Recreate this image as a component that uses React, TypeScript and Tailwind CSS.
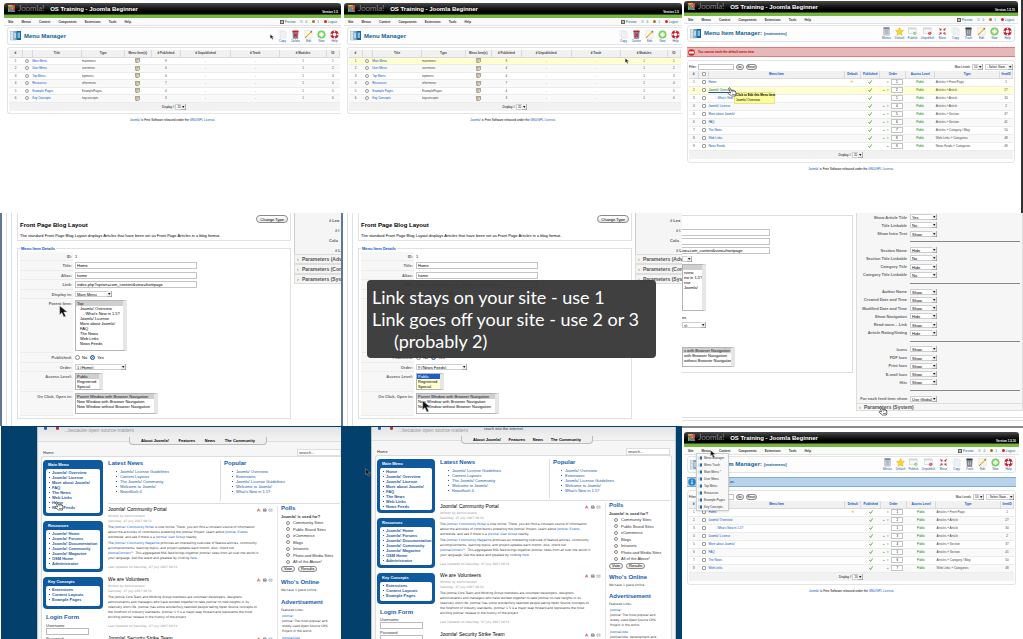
import type { ReactNode } from 'react';
import clsx from 'clsx';

const MENU_BAR = ['Site', 'Menus', 'Content', 'Components', 'Extensions', 'Tools', 'Help'];

const MENUS = [
  { title: 'Main Menu', type: 'mainmenu', published: 9 },
  { title: 'User Menu', type: 'usermenu', published: 4 },
  { title: 'Top Menu', type: 'topmenu', published: 4 },
  { title: 'Resources', type: 'othermenu', published: 7 },
  { title: 'Example Pages', type: 'ExamplePages', published: 4 },
  { title: 'Key Concepts', type: 'keyconcepts', published: 3 },
];

type MenuItem = { title: string; type: string; id: number; order: number; child?: boolean };

const ITEMS: MenuItem[] = [
  { title: 'Home', type: 'Articles » Front Page', id: 1, order: 1 },
  { title: 'Joomla! Overview', type: 'Articles » Article', id: 27, order: 2 },
  { title: "What's New in 1.5?", type: 'Articles » Article', id: 34, order: 1, child: true },
  { title: 'Joomla! License', type: 'Articles » Article', id: 2, order: 4 },
  { title: 'More about Joomla!', type: 'Articles » Section', id: 37, order: 5 },
  { title: 'FAQ', type: 'Articles » Section', id: 41, order: 6 },
  { title: 'The News', type: 'Articles » Category / Blog', id: 50, order: 7 },
  { title: 'Web Links', type: 'Web Links » Categories', id: 48, order: 8 },
  { title: 'News Feeds', type: 'News Feeds » Categories', id: 49, order: 9 },
];

/* ---------- drawings ---------- */

function JoomlaMark() {
  return (
    <svg viewBox="0 0 20 20" className="size-[9px] shrink-0" fill="none" strokeWidth="3.2" strokeLinecap="round">
      <path d="M4 15V9a3 3 0 0 1 5-2l5 5" stroke="#7ac143" />
      <path d="M5 4h6a3 3 0 0 1 2 5l-5 5" stroke="#f9a541" />
      <path d="M16 5v6a3 3 0 0 1-5 2L6 8" stroke="#f44321" />
      <path d="M15 16H9a3 3 0 0 1-2-5l5-5" stroke="#5091cd" />
      <circle cx="4" cy="4" r="2" fill="#f9a541" />
      <circle cx="16" cy="4" r="2" fill="#f44321" />
      <circle cx="4" cy="16" r="2" fill="#7ac143" />
      <circle cx="16" cy="16" r="2" fill="#5091cd" />
    </svg>
  );
}

function ManagerIcon() {
  return (
    <svg viewBox="0 0 22 20" className="h-[10px] w-[11px] shrink-0">
      <rect x="0.5" y="1" width="12" height="17" fill="#f7fafc" stroke="#8fa9bd" />
      <path d="M2 4h5M2 7h4M2 10h4M2 13h4M2 16h9" stroke="#8fb2cc" />
      <rect x="7" y="1" width="6" height="16" fill="#3c7fa9" />
      <rect x="8.5" y="3" width="3" height="12" fill="#e6f0f6" />
      <rect x="13" y="0" width="9" height="18" fill="#16679b" />
      <rect x="15" y="3" width="5" height="11" fill="#7dbbe0" />
    </svg>
  );
}

function ToolIcon({ name }: { name: string }) {
  const box = 'size-[9px]';
  switch (name) {
    case 'Menus':
      return (
        <svg viewBox="0 0 20 20" className={box}>
          <rect x="4" y="1" width="12" height="17" fill="#d3d9e0" stroke="#8a94a0" />
          <rect x="4" y="1" width="12" height="4" fill="#7a8794" />
          <path d="M6 8h8M6 11h8M6 14h8" stroke="#6f7c8a" />
        </svg>
      );
    case 'Default':
      return (
        <svg viewBox="0 0 20 20" className={box}>
          <path d="m10 1 2.8 6 6.2.7-4.6 4.4 1.3 6.4L10 15.3 4.3 18.5l1.3-6.4L1 7.7 7.2 7z" fill="#fbd52b" stroke="#e2a41a" />
        </svg>
      );
    case 'Publish':
    case 'Unpublish':
      return (
        <svg viewBox="0 0 20 20" className={box}>
          <rect x="1" y="2" width="17" height="13" fill="#f5f7f8" stroke="#b9c2c8" />
          <path d="M1 4h17" stroke="#c3cbd1" strokeWidth="2" />
          <circle cx="15" cy="14" r="3.5" fill={name === 'Publish' ? '#7cc95d' : '#d83a3a'} />
          <path d={name === 'Publish' ? 'm13 14 1.5 2 3-4' : 'm13.5 12.5 3 3'} stroke="#fff" strokeWidth="1.5" fill="none" />
        </svg>
      );
    case 'Move':
      return (
        <svg viewBox="0 0 20 20" className={box}>
          <path d="M2 2h5v5H2zM13 2h5v5h-5zM2 12h5v5H2zM13 12h5v5h-5z" fill="#ddcccc" />
          <path d="m3 3 4 4m0-3v3H4M17 3l-4 4m0-3v3h3M3 17l4-4m0 3v-3H4M17 17l-4-4m0 3v-3h3" stroke="#b01e28" strokeWidth="1.5" fill="none" />
        </svg>
      );
    case 'Copy':
      return (
        <svg viewBox="0 0 20 20" className={box}>
          <rect x="2" y="1" width="11" height="14" fill="#f6f8fa" stroke="#dde2e6" />
          <rect x="6" y="4" width="12" height="14" fill="#eef2f5" stroke="#d3dade" />
        </svg>
      );
    case 'Delete':
    case 'Trash':
      return (
        <svg viewBox="0 0 20 20" className={box}>
          <path d="M4 5h12l-1 14H5z" fill={name === 'Delete' ? '#8b8c98' : '#848c93'} stroke="#5a6269" />
          <rect x="3" y="1" width="14" height="4" rx="1" fill={name === 'Delete' ? '#bb2335' : '#343b42'} />
          {name === 'Delete' ? (
            <path d="m7 8 6 7m0-7-6 7" stroke="#d81f33" strokeWidth="2.6" />
          ) : (
            <path d="M8 8v8m4-8v8" stroke="#d2d7db" strokeWidth="1.5" />
          )}
        </svg>
      );
    case 'Edit':
      return (
        <svg viewBox="0 0 20 20" className={box}>
          <rect x="2" y="1" width="16" height="17" fill="#faf6e8" stroke="#dcd8cb" />
          <path d="M4 16 16 4" stroke="#e2b23c" strokeWidth="2.5" />
          <path d="m3 17 2-2" stroke="#6b4f1e" strokeWidth="2" />
          <path d="m15 5 2-2" stroke="#444" strokeWidth="2.5" />
        </svg>
      );
    case 'New':
      return (
        <svg viewBox="0 0 20 20" className={box}>
          <circle cx="10" cy="10" r="8.5" fill="#86d465" stroke="#5db83b" />
          <path d="M10 5v10M5 10h10" stroke="#fff" strokeWidth="4" />
        </svg>
      );
    default:
      return (
        <svg viewBox="0 0 20 20" className={box}>
          <circle cx="10" cy="10" r="6.5" fill="none" stroke="#c8202f" strokeWidth="5" />
          <path d="M10 1v4M10 15v4M1 10h4M15 10h4" stroke="#fff" strokeWidth="3" />
        </svg>
      );
  }
}

function Arrow({ className }: { className?: string }) {
  return (
    <svg viewBox="0 0 14 20" className={clsx('pointer-events-none absolute z-20', className)}>
      <path d="M1 1v14l3.5-3.2L7.5 18.5l3-1.3-3-6.4H13z" fill="#111" stroke="#ddd" strokeWidth="0.8" />
    </svg>
  );
}

function Hand({ className }: { className?: string }) {
  return (
    <svg viewBox="0 0 20 20" className={clsx('pointer-events-none absolute z-20 size-[10px]', className)}>
      <path
        d="M6 9 3.5 3.5Q3 2 4.5 1.5T6.5 3L8.5 7.5 13 6.5 16.5 8 18 12l-1 6H9L3 13.5Q1.5 12 2.5 11t3 .5L7 12z"
        fill="#fff"
        stroke="#222"
        strokeWidth="1.3"
      />
      <path d="m10 8 1 3m2-4 1 3m2-2 .5 2M10 15h6" stroke="#222" fill="none" />
    </svg>
  );
}

function Check() {
  return (
    <svg viewBox="0 0 10 10" className="mx-auto size-[4px]">
      <path d="m1 5 3 4 5-8" fill="none" stroke="#3da021" strokeWidth="2" />
    </svg>
  );
}

function ArticleIcons() {
  return (
    <svg viewBox="0 0 48 12" className="h-[4px] w-[17px] shrink-0">
      <path d="M3 11 6 2l2 6 3 3M3 8l8-2" stroke="#c44" fill="none" strokeWidth="1.8" />
      <rect x="20" y="4" width="10" height="6" fill="#9a9a9a" stroke="#666" />
      <rect x="22" y="1" width="6" height="4" fill="#ddd" stroke="#888" />
      <path d="M37 3h10v7H37zl5 4 5-4" fill="#e8eef4" stroke="#6b84a0" />
    </svg>
  );
}

/* ---------- small controls ---------- */

function Drop({ label, value, className }: { label: string; value: string; className?: string }) {
  return (
    <span className={clsx('relative inline-flex h-[6px] shrink-0', className)}>
      <select aria-label={label} className="h-full w-full appearance-none border border-[#cfcfcf] bg-white pl-px text-black">
        <option>{value}</option>
      </select>
      <svg viewBox="0 0 10 12" className="pointer-events-none absolute top-0 right-0 h-full w-[5px]">
        <path d="M0 0h10v12H0z" fill="#ededed" />
        <path d="M10 0v12H0" fill="none" stroke="#777" strokeWidth="2" />
        <path d="M2 4h5L4.5 8z" fill="#222" />
      </svg>
    </span>
  );
}

function Pill({ children, className }: { children: ReactNode; className?: string }) {
  return (
    <button
      type="button"
      className={clsx(
        'shrink-0 rounded-full border border-[#8a8a8a] bg-linear-to-b from-white to-[#e8e8e8] whitespace-nowrap text-black',
        className,
      )}
    >
      {children}
    </button>
  );
}

type Option = string | { text: string; depth: number };

function ListBox({ label, options, className, tone = 'grey' }: { label: string; options: Option[]; className?: string; tone?: 'grey' | 'blue' }) {
  const rows = options.map((o) => (typeof o === 'string' ? { text: o, depth: 0 } : o));
  return (
    <select
      multiple
      aria-label={label}
      defaultValue={[rows[0].text]}
      className={clsx(
        'block shrink-0 overflow-hidden rounded-none border border-r-4 border-[#b5b5b5] border-r-[#e6e6e6] p-0 text-[4px] leading-[4px]',
        tone === 'blue' ? 'bg-[#ffffcf]' : 'bg-white',
        className,
      )}
    >
      {rows.map((o) => (
        <option
          key={o.text}
          value={o.text}
          className={clsx(
            'h-[5px] min-h-0 overflow-hidden pr-0 pb-0 leading-[5px]',
            o.depth === 0 && 'pl-px',
            o.depth === 1 && 'pl-[4px]',
            o.depth === 2 && 'pl-[7px]',
            tone === 'blue'
              ? 'checked:bg-linear-to-b checked:from-[#1d5fc4] checked:to-[#1d5fc4] checked:text-white'
              : 'checked:bg-linear-to-b checked:from-[#cfcfcf] checked:to-[#cfcfcf]',
          )}
        >
          {o.text}
        </option>
      ))}
    </select>
  );
}

/* ---------- administrator ---------- */

function AdminShell({ children, menu, version, className }: { children: ReactNode; menu?: ReactNode; version: string; className?: string }) {
  return (
    <section className={clsx('relative flex min-w-0 flex-col overflow-hidden bg-white text-[3px] leading-[4px] text-[#444]', className)}>
      <header className="flex h-[12px] shrink-0 items-center rounded-t-[3px] border-b border-[#2c5d17] bg-linear-to-b from-[#4c4c4c] via-[#161616] to-black px-[3px] text-white">
        <JoomlaMark />
        <span className="ml-[2px] font-[Lato] text-[8px] leading-[9px] font-light text-[#d7d7d7]">Joomla!</span>
        <h1 className="ml-[6px] text-[6px] leading-[8px] font-bold whitespace-nowrap">OS Training - Joomla Beginner</h1>
        <span className="ml-auto self-end font-bold whitespace-nowrap">{version}</span>
      </header>
      <div className="h-[3px] shrink-0 bg-[#76b53f]" />
      <nav className="relative flex h-[8px] shrink-0 items-center gap-[8px] border-b border-[#e3e3e3] bg-[#fafafa] px-[4px] font-bold text-[#333]">
        {MENU_BAR.map((m) => (
          <a key={m} href="#">
            {m}
          </a>
        ))}
        <span className="ml-auto flex items-center gap-[5px] font-normal text-[#1d5a9c]">
          <a href="#" className="flex items-center gap-px">
            <i className="size-[4px] border border-[#666] bg-[#c9c2a4]" />
            Preview
          </a>
          <span className="flex items-center gap-[2px]">
            <i className="size-[3px] bg-[#cfdde8]" />0
          </span>
          <span className="flex items-center gap-[2px]">
            <i className="size-[3px] rounded-full bg-[#a5702c]" />1
          </span>
          <a href="#" className="flex items-center gap-px">
            <i className="size-[3px] rounded-full bg-[#d4213a]" />
            Logout
          </a>
        </span>
        {menu}
      </nav>
      {children}
      <p className="mt-[4px] shrink-0 text-center whitespace-nowrap text-black">
        <a href="#" className="text-[#0b55c4]">Joomla!</a> is Free Software released under the{' '}
        <a href="#" className="text-[#0b55c4]">GNU/GPL License</a>.
      </p>
    </section>
  );
}

function Toolbar({ title, sub, tools, className }: { title: string; sub?: string; tools: string[]; className?: string }) {
  return (
    <div className={clsx('mx-[3px] flex shrink-0 items-center rounded-[3px] border border-[#e4e4e4] bg-[#fdfdfd] pl-[2px]', className)}>
      <ManagerIcon />
      <h2 className="ml-[3px] text-[6px] leading-[8px] font-bold whitespace-nowrap text-[#146295]">
        {title}
        {sub && <small className="ml-[2px] text-[4px] leading-[8px]">{sub}</small>}
      </h2>
      <div className="ml-auto flex">
        {tools.map((t) => (
          <button
            key={t}
            type="button"
            className={clsx('flex flex-col items-center text-[3px] leading-[4px] text-[#1d5a9c]', t === 'Unpublish' ? 'w-[17px]' : 'w-[13px]')}
          >
            <ToolIcon name={t} />
            {t}
          </button>
        ))}
      </div>
    </div>
  );
}

const headCell = 'border-r border-b border-[#dadada] bg-[#f1f1f1] p-0 font-bold whitespace-nowrap overflow-hidden';
const bodyCell = 'border-b border-[#ececec] p-0 whitespace-nowrap overflow-hidden';

function DisplayRow({ span }: { span: number }) {
  return (
    <tfoot>
      <tr>
        <td colSpan={span} className="h-[9px] border-t border-[#999] bg-[#f2f2f2] p-0">
          <div className="flex items-center justify-center gap-px text-black">
            Display # <Drop label="Display" value="20" className="w-[11px]" />
          </div>
        </td>
      </tr>
    </tfoot>
  );
}

function MenuManager({ active, name, className, children }: { active?: number; name: string; className?: string; children?: ReactNode }) {
  return (
    <AdminShell className={className} version="Version 1.5">
      <Toolbar title="Menu Manager" tools={['Copy', 'Delete', 'Edit', 'New', 'Help']} className="mt-px mr-0 h-[18px] rounded-r-none border-r-0" />
      <div className="mt-[2px] ml-[3px] shrink-0 rounded-l-[3px] border border-r-0 border-[#e4e4e4] px-px py-[2px]">
        <table className="w-full table-fixed border-collapse">
          <colgroup>
            <col className="w-[4%]" />
            <col className="w-[3%]" />
            <col className="w-[15%]" />
            <col className="w-[13%]" />
            <col className="w-[8%]" />
            <col className="w-[9%]" />
            <col className="w-[15%]" />
            <col className="w-[15%]" />
            <col className="w-[14%]" />
            <col className="w-[4%]" />
          </colgroup>
          <thead>
            <tr className="h-[7px]">
              <th className={headCell}>#</th>
              <th className={headCell} />
              {['Title', 'Type', 'Menu Item(s)', '# Published', '# Unpublished', '# Trash', '# Modules', 'ID'].map((h) => (
                <th key={h} className={headCell}>{h}</th>
              ))}
            </tr>
          </thead>
          <tbody className="text-center">
            {MENUS.map((m, i) => (
              <tr key={m.title} className={clsx(i % 2 === 0 ? 'h-[7px]' : 'h-[8px]', active === i ? 'bg-[#ffffd2]' : i % 2 === 1 && 'bg-[#f9f9f9]')}>
                <td className={bodyCell}>{i + 1}</td>
                <td className={bodyCell}>
                  <input type="radio" name={name} aria-label={m.title} className="mx-auto block size-[4px] appearance-none rounded-full border border-[#999] bg-white" />
                </td>
                <td className={clsx(bodyCell, 'text-left')}>
                  <a href="#" className="text-[#0b55c4]">{m.title}</a>
                </td>
                <td className={clsx(bodyCell, 'text-left')}>{m.type}</td>
                <td className={bodyCell}>
                  <svg viewBox="0 0 12 12" className="mx-auto size-[5px]">
                    <path d="M1 1h10v7l-3 3H2z" fill="#e9dfc8" stroke="#776a50" strokeWidth="1.5" />
                    <path d="M3 4h6M3 7h4" stroke="#776a50" />
                  </svg>
                </td>
                <td className={bodyCell}>{m.published}</td>
                <td className={bodyCell}>-</td>
                <td className={bodyCell}>-</td>
                <td className={bodyCell}>1</td>
                <td className={bodyCell}>{i + 1}</td>
              </tr>
            ))}
          </tbody>
          <DisplayRow span={10} />
        </table>
      </div>
      {children}
    </AdminShell>
  );
}

function ItemManager({
  items,
  active,
  message,
  menu,
  className,
  children,
}: {
  items: MenuItem[];
  active?: number;
  message: ReactNode;
  menu?: ReactNode;
  className?: string;
  children?: ReactNode;
}) {
  return (
    <AdminShell className={className} menu={menu} version="Version 1.5.10">
      <Toolbar
        title="Menu Item Manager:"
        sub="[mainmenu]"
        tools={['Menus', 'Default', 'Publish', 'Unpublish', 'Move', 'Copy', 'Trash', 'Edit', 'New', 'Help']}
        className="mt-px h-[17px]"
      />
      {message}
      <div className="mx-[3px] mt-[3px] shrink-0 rounded-[3px] border border-[#e4e4e4] px-px pt-[2px] pb-[3px]">
        <div className="flex h-[7px] items-center gap-[2px] text-black">
          <label className="flex items-center gap-px">
            Filter: <input type="text" className="h-[6px] w-[36px] border border-[#c4c4c4]" />
          </label>
          <Pill className="px-px">Go</Pill>
          <Pill className="px-px">Reset</Pill>
          <span className="ml-auto">Max Levels</span>
          <Drop label="Max Levels" value="10" className="w-[11px]" />
          <Drop label="State" value="- Select State -" className="w-[28px]" />
        </div>
        <table className="mt-px w-full table-fixed border-collapse">
          <colgroup>
            <col className="w-[3%]" />
            <col className="w-[3%]" />
            <col className="w-[42%]" />
            <col className="w-[5%]" />
            <col className="w-[6%]" />
            <col className="w-[8%]" />
            <col className="w-[9%]" />
            <col className="w-[20%]" />
            <col className="w-[4%]" />
          </colgroup>
          <thead className="text-[#0b55c4]">
            <tr className="h-[7px]">
              <th className={headCell}>#</th>
              <th className={headCell}>
                <input type="checkbox" aria-label="Select all" className="mx-auto block size-[4px] appearance-none rounded-[1px] border border-[#999] bg-white" />
              </th>
              {['Menu Item', 'Default', 'Published', 'Order', 'Access Level', 'Type', 'ItemID'].map((h) => (
                <th key={h} className={headCell}>{h}</th>
              ))}
            </tr>
          </thead>
          <tbody className="text-center">
            {items.map((m, i) => (
              <tr key={m.title} className={clsx('h-[8px]', active === i ? 'bg-[#ffffd2]' : i % 2 === 1 && 'bg-[#f9f9f9]')}>
                <td className={bodyCell}>{i + 1}</td>
                <td className={bodyCell}>
                  <input type="checkbox" aria-label={m.title} className="mx-auto block size-[4px] appearance-none rounded-[1px] border border-[#999] bg-white" />
                </td>
                <td className={clsx(bodyCell, 'text-left', m.child && 'pl-[6px]')}>
                  {m.child && <span className="text-[#999]">└ </span>}
                  <a href="#" className={clsx('text-[#0b55c4]', active === i && 'underline')}>{m.title}</a>
                </td>
                <td className={bodyCell}>{i === 0 && <span className="text-[4px] text-[#eec41c]">★</span>}</td>
                <td className={bodyCell}>
                  <Check />
                </td>
                <td className={bodyCell}>
                  <div className="flex items-center justify-end gap-[2px] pr-[3px] text-[#55a83a]">
                    {!m.child && i > 0 && <span>▴</span>}
                    {!m.child && i < items.length - 1 && <span>▾</span>}
                    <input
                      type="text"
                      aria-label={`Order of ${m.title}`}
                      defaultValue={m.order}
                      className="h-[6px] w-[12px] border border-[#c4c4c4] bg-white text-center text-[3px] leading-[4px] text-black"
                    />
                  </div>
                </td>
                <td className={clsx(bodyCell, 'text-[#008000]')}>Public</td>
                <td className={clsx(bodyCell, 'pl-px text-left')}>{m.type}</td>
                <td className={bodyCell}>{m.id}</td>
              </tr>
            ))}
          </tbody>
          <DisplayRow span={9} />
        </table>
      </div>
      {children}
    </AdminShell>
  );
}

function MenusDropdown() {
  const entries = ['Menu Manager', 'Menu Trash', 'Main Menu *', 'User Menu', 'Top Menu', 'Resources', 'Example Pages', 'Key Concepts'];
  return (
    <ul className="absolute top-[6px] left-[12px] z-10 w-[33px] border border-[#ccc] bg-[#f8f8f8] font-normal shadow">
      {entries.map((e) => (
        <li key={e} className="flex h-[7px] items-center gap-[2px] px-px">
          <svg viewBox="0 0 10 10" className="size-[4px]">
            <path d="M0 1h10v8H0z" fill="#cfdfea" />
            <path d="M5 1h5v8H5z" fill="#2c6b97" />
          </svg>
          <a href="#" className="whitespace-nowrap">{e}</a>
        </li>
      ))}
    </ul>
  );
}

/* ---------- menu item edit form ---------- */

const PARENTS: Option[] = [
  'Top',
  { text: 'Joomla! Overview', depth: 1 },
  { text: "- What's New in 1.5?", depth: 2 },
  { text: 'Joomla! License', depth: 1 },
  { text: 'More about Joomla!', depth: 1 },
  { text: 'FAQ', depth: 1 },
  { text: 'The News', depth: 1 },
  { text: 'Web Links', depth: 1 },
  { text: 'News Feeds', depth: 1 },
];
const TARGETS = ['Parent Window with Browser Navigation', 'New Window with Browser Navigation', 'New Window without Browser Navigation'];

function Row({ label, className, children }: { label: string; className?: string; children: ReactNode }) {
  return (
    <div className={clsx('flex shrink-0', className)}>
      <span className="w-[53px] shrink-0 border-b border-[#ececec] bg-[#f7f7f7] pt-[2px] pr-px text-right font-bold text-[#666]">{label}:</span>
      <div className="ml-[2px] flex items-start pt-px">{children}</div>
    </div>
  );
}

function EditForm({ order, blue, name, children }: { order: string; blue?: boolean; name: string; children?: ReactNode }) {
  const field = 'h-[7px] w-[122px] border border-[#c4c4c4] bg-white px-px text-[4px] leading-[5px]';
  return (
    <section className="relative flex min-w-0 overflow-hidden border-l-2 border-[#5e7697] bg-white pl-[4px] text-[4px] leading-[5px] text-black">
      <div className="flex border-x border-[#d9e2ea] px-[2px]" />
      <div className="ml-[5px] w-[274px] shrink-0">
        <div className="flex h-[28px] justify-between border border-t-0 border-[#e2e2e2] pl-[2px]">
          <div>
            <h2 className="mt-[8px] text-[6px] leading-[8px] font-bold whitespace-nowrap">Front Page Blog Layout</h2>
            <p className="mt-[4px] whitespace-nowrap">
              The standard Front Page Blog Layout displays Articles that have been set as Front Page Articles in a blog format.
            </p>
          </div>
          <Pill className="mt-[2px] mr-[2px] h-[8px] px-[3px] leading-[5px]">Change Type</Pill>
        </div>
        <fieldset className="mt-[5px] min-w-0 border border-[#e0e0e0] px-[2px] pt-px pb-[2px]">
          <legend className="px-px font-bold text-[#0b55c4]">Menu Item Details</legend>
          <Row label="ID" className="h-[9px]">
            <span className="pt-px">1</span>
          </Row>
          <Row label="Title" className="h-[10px]"><input aria-label="Title" defaultValue="Home" className={field} /></Row>
          <Row label="Alias" className="h-[9px]"><input aria-label="Alias" defaultValue="home" className={field} /></Row>
          <Row label="Link" className="h-[10px]"><input aria-label="Link" defaultValue="index.php?option=com_content&view=frontpage" className={field} /></Row>
          <Row label="Display in" className="h-[9px]"><Drop label="Display in" value="Main Menu" className="w-[37px]" /></Row>
          <Row label="Parent Item" className="h-[54px]"><ListBox label="Parent Item" options={PARENTS} className="h-[51px] w-[52px]" /></Row>
          <Row label="Published" className="h-[10px]">
            <label className="flex items-center gap-[2px] pt-px">
              <input type="radio" name={name} className="size-[5px] appearance-none rounded-full border border-[#888]" /> No
            </label>
            <label className="ml-[3px] flex items-center gap-[2px] pt-px">
              <input type="radio" name={name} defaultChecked className="size-[5px] appearance-none rounded-full border border-[#3b6ea5] bg-[#234f7d] shadow-[inset_0_0_0_1px_#cfe3f7]" /> Yes
            </label>
          </Row>
          <Row label="Order" className="h-[9px]"><Drop label="Order" value={order} className="w-[51px]" /></Row>
          <Row label="Access Level" className="h-[20px]">
            <ListBox label="Access Level" options={['Public', 'Registered', 'Special']} className="h-[17px] w-[28px]" tone={blue ? 'blue' : 'grey'} />
          </Row>
          <Row label="On Click, Open in" className="h-[24px]"><ListBox label="On Click, Open in" options={TARGETS} className="h-[21px] w-[83px]" /></Row>
        </fieldset>
      </div>
      <aside className="ml-[3px] min-w-0 flex-1 leading-[5px] font-bold whitespace-nowrap text-[#555]">
        <div className="flex h-[41px] flex-col border-l border-[#ccc] bg-[#f5f5f5] pl-[34px]">
          {['# Lea', '# I', 'Colu', '# L'].map((t) => (
            <p key={t} className={clsx('h-[10px] pt-[5px]', t.length < 4 && 'pl-[6px]')}>{t}</p>
          ))}
        </div>
        {['Parameters (Adv', 'Parameters (Con', 'Parameters (Sys'].map((t) => (
          <p key={t} className="flex h-[10px] items-center border border-r-0 border-[#ddd] bg-[#f4f4f4] text-[5px]">
            <span className="w-[7px] shrink-0 pl-[2px] text-[#6fae45]">›</span>
            {t}
          </p>
        ))}
      </aside>
      {children}
    </section>
  );
}

const PARAMS: ([string, string] | null)[] = [
  ['Show Article Title', 'Yes'],
  ['Title Linkable', 'No'],
  ['Show Intro Text', 'Show'],
  null,
  ['Section Name', 'Hide'],
  ['Section Title Linkable', 'No'],
  ['Category Title', 'Hide'],
  ['Category Title Linkable', 'No'],
  null,
  ['Author Name', 'Show'],
  ['Created Date and Time', 'Show'],
  ['Modified Date and Time', 'Show'],
  ['Show Navigation', 'Hide'],
  ['Read more... Link', 'Show'],
  ['Article Rating/Voting', 'Hide'],
  null,
  ['Icons', 'Show'],
  ['PDF Icon', 'Show'],
  ['Print Icon', 'Show'],
  ['E-mail Icon', 'Show'],
  ['Hits', 'Show'],
  null,
  ['For each feed item show', 'Use Global'],
];

// Same form scrolled down and to the right, so its left part is cut off
function ParamsScreen() {
  const field = 'block h-[7px] w-full border border-l-0 border-[#c4c4c4] bg-white text-[4px] leading-[5px]';
  return (
    <section className="relative flex min-w-0 flex-col overflow-hidden bg-white text-[4px] leading-[5px] text-black">
      <div className="flex">
        <div className="mt-[2px] h-[158px] w-[171px] shrink-0 overflow-hidden border border-l-0 border-[#ddd] pt-[13px]">
          <div className="flex w-[88px] flex-col gap-[2px]">
            <input aria-label="Title" className={field} />
            <input aria-label="Alias" className={field} />
            <input aria-label="Link" defaultValue="ion=com_content&view=frontpage" className={field} />
          </div>
          <Drop label="Menu" value="" className="mt-[2px] w-[10px]" />
          <ListBox label="Parent" options={[' ', 'rview', 'ew in 1.5?', 'nse', 'Joomla!']} className="mt-[2px] h-[47px] w-[24px]" />
          <p className="mt-[4px]">es</p>
          <Drop label="Order" value="s)" className="mt-[2px] w-[24px]" />
          <ListBox
            label="Target"
            options={['s with Browser Navigation', 'with Browser Navigation', 'without Browser Navigation']}
            className="mt-[19px] h-[20px] w-[53px]"
          />
        </div>
        <div className="ml-[3px] min-w-0 flex-1 border-x border-[#ddd] bg-[#f6f6f6]">
          <div className="flex h-[190px] flex-col">
            {PARAMS.map((p, i) =>
              p ? (
                <label key={i} className="flex flex-1 items-center">
                  <span className="w-[50px] shrink-0 text-right font-bold whitespace-nowrap text-[#666]">{p[0]}</span>
                  <Drop label={p[0]} value={p[1]} className="ml-[3px] w-[27px]" />
                </label>
              ) : (
                <div key={i} className="mr-[2px] ml-[53px] flex flex-1 items-center">
                  <hr className="w-full border-[#888]" />
                </div>
              ),
            )}
          </div>
          <p className="flex h-[8px] items-center border-y border-[#ddd] text-[5px] font-bold text-[#555]">
            <span className="w-[7px] pl-[2px] text-[#6fae45]">›</span>
            Parameters (System)
          </p>
        </div>
      </div>
      <div className="mt-[6px] h-[4px] border-y border-[#e0e0e0]" />
      <Hand className="top-[193px] left-[196px]" />
    </section>
  );
}

/* ---------- public site ---------- */

const siteHeading = 'text-[6px] leading-[7px] font-bold whitespace-nowrap text-[#135cae]';
// wide face, so that running text stays legible one step smaller
const siteText = "font-['DejaVu_Sans',sans-serif] text-[3px] leading-[5px]";

function Module({ title, links, className }: { title: string; links: string[]; className?: string }) {
  return (
    <div className={clsx('shrink-0 rounded-[4px] border-3 border-t-0 border-[#0f5a9e] bg-[#0f5a9e]', className)}>
      <h3 className="h-[9px] pt-[3px] pl-[2px] text-[4px] leading-[4px] font-bold text-white">{title}</h3>
      <ul className="h-[calc(100%-9px)] rounded-[2px] bg-white pt-px pl-[3px] text-[4px] leading-[5px] font-bold whitespace-nowrap text-[#1d5a9c]">
        {links.map((l) => (
          <li key={l} className="flex items-center gap-[2px]">
            <i className="size-px bg-[#1d5a9c]" />
            <a href="#">{l}</a>
          </li>
        ))}
      </ul>
    </div>
  );
}

function LinkList({ title, links, className }: { title: string; links: string[]; className?: string }) {
  return (
    <div className={clsx('min-w-0', className)}>
      <h3 className={siteHeading}>{title}</h3>
      <ul className="mt-[2px] pl-[8px] leading-[5px] whitespace-nowrap text-[#1d5a9c]">
        {links.map((l) => (
          <li key={l} className="flex items-center gap-[3px]">
            <i className="size-px bg-[#1d5a9c]" />
            <a href="#">{l}</a>
          </li>
        ))}
      </ul>
    </div>
  );
}

function Article({ title, children, className }: { title: string; children?: ReactNode; className?: string }) {
  return (
    <article className={clsx('whitespace-nowrap', className)}>
      <div className="flex items-center justify-between pr-[4px]">
        <h3 className="text-[5px] leading-[7px] text-black">{title}</h3>
        <ArticleIcons />
      </div>
      <div className={siteText}>
        <p className="mt-px text-[#999]">Written by Administrator</p>
        <p className="text-[#999]">Saturday, 07 July 2007 09:54</p>
        {children}
        <p className="mt-[4px] text-[#999]">Last Updated on Saturday, 07 July 2007 09:54</p>
      </div>
    </article>
  );
}

function A({ children }: { children: ReactNode }) {
  return <a href="#" className="text-[#0b55c4]">{children}</a>;
}

const POLL = ['Community Sites', 'Public Brand Sites', 'eCommerce', 'Blogs', 'Intranets', 'Photo and Media Sites', 'All of the Above!'];

function Site({ links, second, name, children }: { links: string[]; second?: boolean; name: string; children?: ReactNode }) {
  return (
    <section
      className={clsx(
        'relative flex min-w-0 overflow-hidden bg-[#04406c] pt-px text-[4px] leading-[5px] text-[#333]',
        second ? 'pr-[6px] pl-[30px]' : 'border-l border-white pl-[36px]',
      )}
    >
      <div className={clsx('flex min-w-0 flex-1 flex-col border-l border-[#b9c4cd] bg-[#f6f6f6] pl-[3px]', second && 'border-r pr-[3px]')}>
        <header className={clsx('-ml-[3px] shrink-0 border-b border-[#ddd] bg-linear-to-b from-[#e3e3e3] to-[#f4f4f4]', second ? '-mr-[3px] h-[14px]' : 'h-[15px]')}>
          <div className="flex items-start pl-[6px]">
            <i className="size-[3px] rounded-b-full bg-[#2b64ae]" />
            <i className="ml-[9px] size-[3px] rounded-b-full bg-[#c92b3b]" />
            <span className="ml-[5px] text-[5px] leading-[7px] whitespace-nowrap text-[#999]">...because open source matters</span>
            {second && <span className="ml-[16px] leading-[4px] whitespace-nowrap">reach into the internet.</span>}
          </div>
        </header>
        <nav
          className={clsx(
            '-mt-[5px] flex h-[8px] shrink-0 items-center justify-between self-start rounded-b-[4px] border border-t-0 border-[#bbb] bg-[#efefef] px-[11px] font-bold text-black',
            second ? 'ml-[86px] w-[132px]' : 'ml-[88px] w-[138px]',
          )}
        >
          {['About Joomla!', 'Features', 'News', 'The Community'].map((t) => (
            <a key={t} href="#">{t}</a>
          ))}
        </nav>
        <div className={clsx('mt-[3px] flex h-[8px] shrink-0 items-center justify-between pl-[2px]', second && 'pr-[2px]')}>
          <span>Home</span>
          <input type="text" aria-label="Search" defaultValue="search..." className="h-[7px] w-[44px] border border-[#ddd] bg-white px-px text-[4px] leading-[5px]" />
        </div>
        <div className={clsx('flex flex-1 gap-[5px] border border-b-0 border-[#ddd] bg-white px-px pt-[3px]', second ? 'rounded-t-[3px]' : 'rounded-tl-[3px] border-r-0')}>
          <div className={clsx('flex shrink-0 flex-col gap-[5px]', second ? 'w-[58px]' : 'w-[60px]')}>
            <Module title="Main Menu" links={links} className={second ? 'h-[54px]' : 'h-[56px]'} />
            <Module
              title="Resources"
              links={['Joomla! Home', 'Joomla! Forums', 'Joomla! Documentation', 'Joomla! Community', 'Joomla! Magazine', 'OSM Home', 'Administrator']}
              className={second ? 'h-[50px]' : 'h-[51px]'}
            />
            <Module title="Key Concepts" links={['Extensions', 'Content Layouts', 'Example Pages']} className={second ? 'h-[31px]' : 'h-[32px]'} />
            <form className="pl-[3px]">
              <h3 className={siteHeading}>Login Form</h3>
              <label className={clsx('block', second ? 'mt-px' : 'mt-[2px]')}>
                Username
                <input type="text" className="block h-[7px] w-[43px] border border-[#bbb]" />
              </label>
              <label className="mt-px block">
                Password
                <input type="password" className="block h-[7px] w-[43px] border border-[#bbb]" />
              </label>
            </form>
          </div>
          <div className="min-w-0 flex-1">
            <div className={clsx('flex', second ? 'h-[39px]' : 'h-[41px]')}>
              <LinkList
                title="Latest News"
                links={['Joomla! License Guidelines', 'Content Layouts', 'The Joomla! Community', 'Welcome to Joomla!', 'Newsflash 4']}
                className={clsx('shrink-0 border-r border-[#ddd]', second ? 'w-[110px]' : 'w-[113px]')}
              />
              <LinkList
                title="Popular"
                links={['Joomla! Overview', 'Extensions', 'Joomla! License Guidelines', 'Welcome to Joomla!', "What's New in 1.5?"]}
                className="pl-[3px]"
              />
            </div>
            <div className="mt-[2px] flex border-t border-[#ddd] pt-px">
              <div className={clsx('mt-px shrink-0 border-r border-[#e4e4e4]', second ? 'w-[166px]' : 'w-[170px]')}>
                <Article title="Joomla! Community Portal">
                  <p className="mt-px">
                    The <A>Joomla! Community Portal</A> is now online. There, you will find a constant source of information
                    <br />
                    about the activities of contributors powering the Joomla! Project. Learn about <A>Joomla! Events</A>
                    <br />
                    worldwide, and see if there is a <A>Joomla! User Group</A> nearby.
                  </p>
                  <p className="mt-px">
                    The <A>Joomla! Community Magazine</A> promises an interesting overview of feature articles, community
                    <br />
                    accomplishments, learning topics, and project updates each month. Also, check out
                    <br />
                    <A>JoomlaConnect™</A>. This aggregated RSS feed brings together Joomla! news from all over the world in
                    <br />
                    your language. Get the latest and greatest by clicking <A>here</A>.
                  </p>
                </Article>
                <Article title="We are Volunteers" className={second ? 'mt-[5px]' : 'mt-[6px]'}>
                  <p className="mt-px">
                    The Joomla Core Team and Working Group members are volunteer developers, designers,
                    <br />
                    administrators and managers who have worked together to take Joomla! to new heights in its
                    <br />
                    relatively short life. Joomla! has some wonderfully talented people taking Open Source concepts to
                    <br />
                    the forefront of industry standards. Joomla! 1.5 is a major leap forward and represents the most
                    <br />
                    exciting Joomla! release in the history of the project.
                  </p>
                </Article>
                <Article title="Joomla! Security Strike Team" className="mt-[6px]" />
              </div>
              <aside className="min-w-0 flex-1 pl-[3px] whitespace-nowrap">
                <h3 className={siteHeading}>Polls</h3>
                <p className="mt-[2px] font-bold">Joomla! is used for?</p>
                {POLL.map((p, i) => (
                  <label key={p} className={clsx('ml-[5px] flex items-center gap-[3px]', i % 2 ? 'h-[6px]' : 'h-[7px]')}>
                    <input type="radio" name={name} className="size-[4px] appearance-none rounded-full border border-[#888]" />
                    {p}
                  </label>
                ))}
                <div className="mt-px flex gap-[3px]">
                  <Pill className="px-[2px] leading-[4px]">Vote</Pill>
                  <Pill className="px-[2px] leading-[4px]">Results</Pill>
                </div>
                <h3 className={clsx(siteHeading, second ? 'mt-[5px]' : 'mt-[7px]')}>Who's Online</h3>
                <p className={clsx('mt-[2px]', siteText)}>We have 1 guest online</p>
                <h3 className={clsx(siteHeading, second ? 'mt-[5px]' : 'mt-[6px]')}>Advertisement</h3>
                <div className={siteText}>
                  <p className="mt-[2px]">Featured Links:</p>
                  <p className="mt-px pl-px">
                    <A>Joomla!</A>
                    <br />
                    Joomla! The most popular and
                    <br />
                    widely used Open Source CMS
                    <br />
                    Project in the world.
                  </p>
                  <p className="mt-[2px] pl-px">
                    <A>JoomlaCode</A>
                    <br />
                    JoomlaCode, development and
                  </p>
                </div>
              </aside>
            </div>
          </div>
        </div>
      </div>
      {children}
    </section>
  );
}

/* ---------- contact sheet ---------- */

export default function App() {
  const siteLinks = ['Joomla! Overview', 'Joomla! License', 'More about Joomla!', 'FAQ', 'The News', 'Web Links'];
  return (
    <main className="grid h-screen grid-cols-3 grid-rows-3 overflow-hidden bg-white font-['Liberation_Sans',sans-serif]">
      <MenuManager className="pt-[3px] pl-[4px]" name="menu-a">
        <Arrow className="top-[34px] left-[270px] h-[6px] w-[4px]" />
      </MenuManager>
      <MenuManager className="pt-[3px] pl-[3px]" name="menu-b" active={0}>
        <Arrow className="top-[58px] left-[284px] h-[6px] w-[4px]" />
      </MenuManager>
      <ItemManager
        items={ITEMS}
        active={1}
        className="border-r-2 border-[#333] pt-px pr-[3px] pl-[2px]"
        message={
          <p className="mx-[3px] mt-[5px] flex h-[10px] shrink-0 items-center gap-[3px] border-y border-[#de7a7b] bg-[#e6b8b8] px-px font-bold text-[#c00]">
            <svg viewBox="0 0 14 14" className="size-[7px]">
              <circle cx="7" cy="7" r="6.5" fill="#d5202b" />
              <rect x="2" y="5" width="10" height="4" rx="1" fill="#fff" />
            </svg>
            You cannot trash the default menu item
          </p>
        }
      >
        <div className="absolute top-[92px] left-[52px] z-10 h-[12px] w-[41px] border border-[#e5e58c] bg-[#fcfc9c] px-px leading-[5px] whitespace-nowrap text-black">
          <b>Click to Edit this Menu Item</b>
          <br />
          Joomla! Overview
        </div>
        <Hand className="top-[87px] left-[45px]" />
      </ItemManager>

      <EditForm order="1 (Home)" name="pub-a">
        <Arrow className="top-[92px] left-[57px] h-[13px] w-[9px]" />
      </EditForm>
      <EditForm order="9 (News Feeds)" name="pub-b" blue>
        <Arrow className="top-[187px] left-[79px] h-[13px] w-[9px]" />
        <div className="absolute top-[67px] left-[24px] z-30 h-[78px] w-[289px] rounded-[4px] bg-[#363636]/95 py-[6px] pl-[5px] font-[Lato] text-[18px] leading-[22px] whitespace-nowrap text-white">
          <p>Link stays on your site - use 1</p>
          <p>Link goes off your site - use 2 or 3</p>
          <p className="pl-[22px]">(probably 2)</p>
        </div>
      </EditForm>
      <ParamsScreen />

      <Site name="poll-a" links={[...siteLinks, 'Home', 'News Feeds']}>
        <Hand className="top-[75px] left-[53px]" />
      </Site>
      <Site name="poll-b" links={['Home', ...siteLinks, 'News Feeds']} second>
        <Arrow className="top-[42px] left-[24px] h-[9px] w-[6px]" />
      </Site>
      <ItemManager
        items={ITEMS.slice(0, 8).map((m, i) => (i > 2 ? { ...m, order: i } : m))}
        className="border-t-2 border-[#8a8a8a] pt-[4px] pr-[4px] pl-[2px]"
        menu={<MenusDropdown />}
        message={
          <p className="mx-[3px] mt-[4px] flex h-[10px] shrink-0 items-center gap-px border-y border-[#7fadd6] bg-[#b9d3ea] px-px font-bold text-[#146295]">
            <svg viewBox="0 0 14 14" className="size-[8px] shrink-0">
              <circle cx="7" cy="7" r="6.5" fill="#1f86cf" />
              <path d="M7 3v2M7 6v5" stroke="#fff" strokeWidth="2" />
            </svg>
            <span className="pl-[33px]">on.</span>
          </p>
        }
      >
        <Arrow className="top-[22px] left-[28px] h-[8px] w-[6px]" />
      </ItemManager>
    </main>
  );
}
